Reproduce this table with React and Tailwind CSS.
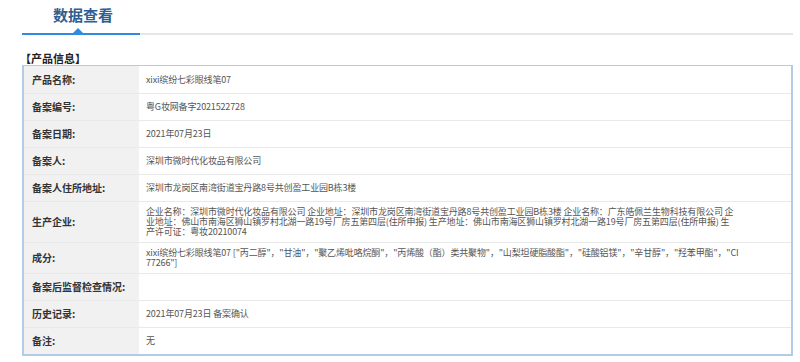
import React from 'react';

const rows = [
	{ label: '产品名称:', value: ['xixi缤纷七彩眼线笔07'] },
	{ label: '备案编号:', value: ['粤G妆网备字2021522728'] },
	{ label: '备案日期:', value: ['2021年07月23日'] },
	{ label: '备案人:', value: ['深圳市微时代化妆品有限公司'] },
	{ label: '备案人住所地址:', value: ['深圳市龙岗区南湾街道宝丹路8号共创盈工业园B栋3楼'] },
	{
		label: '生产企业:',
		value: [
			'企业名称：深圳市微时代化妆品有限公司 企业地址：深圳市龙岗区南湾街道宝丹路8号共创盈工业园B栋3楼 企业名称：广东皓佩兰生物科技有限公司 企',
			'业地址：佛山市南海区狮山镇罗村北湖一路19号厂房五第四层(住所申报) 生产地址：佛山市南海区狮山镇罗村北湖一路19号厂房五第四层(住所申报) 生',
			'产许可证：粤妆20210074',
		],
	},
	{
		label: '成分:',
		value: [
			'xixi缤纷七彩眼线笔07 ["丙二醇"，"甘油"，"聚乙烯吡咯烷酮"，"丙烯酸（酯）类共聚物"，"山梨坦硬脂酸酯"，"硅酸铝镁"，"辛甘醇"，"羟苯甲酯"，"CI',
			'77266"]',
		],
	},
	{ label: '备案后监督检查情况:', value: [] },
	{ label: '历史记录:', value: ['2021年07月23日 备案确认'] },
	{ label: '备注:', value: ['无'] },
];

const font = { fontFamily: '"Noto Sans CJK SC", "Liberation Sans", sans-serif' };

export default function App() {
	return (
		<div className="w-[800px] h-[362px] bg-white overflow-hidden" style={font}>
			<div className="pl-[22px] pr-[7px]">
				<div className="relative h-[35px]">
					<h1 className="absolute left-[31px] top-[5px] text-[15px] font-bold text-[#2f5f92] leading-[20px]">
						数据查看
					</h1>
					<div className="absolute left-0 right-0 bottom-0 flex h-[2px]">
						<div className="w-[118px] bg-[#2f8ae0]"></div>
						<div className="flex-1 bg-[#e6e6e6]"></div>
					</div>
					<div className="absolute left-[51px] bottom-[2px] w-0 h-0 border-l-[5px] border-r-[5px] border-b-[5px] border-l-transparent border-r-transparent border-b-[#2f8ae0]"></div>
				</div>

				<div className="pt-[17px] pb-[1px] text-[11px] font-bold text-[#222] leading-[12px] -ml-[2px]">【产品信息】</div>

				<div className="border-2 border-[#b4cbe8] border-t-[1px]">
					{rows.map((r, i) => (
						<div
							key={i}
							className={`flex min-h-[27px] ${i > 0 ? 'border-t border-[#e9e9e9]' : ''}`}
						>
							<div className="w-[115px] shrink-0 bg-[#f1f1f1] flex items-center pl-[8px] text-[10px] font-bold text-[#333] leading-[10px]">
								{r.label}
							</div>
							<div className="flex-1 flex flex-col justify-center pl-[7px] pr-[10px] py-[5px] text-[9px] text-[#555] leading-[10px] whitespace-nowrap tracking-[-0.15px]">
								{r.value.map((line, j) => (
									<div key={j}>{line}</div>
								))}
							</div>
						</div>
					))}
				</div>
			</div>
		</div>
	);
}
